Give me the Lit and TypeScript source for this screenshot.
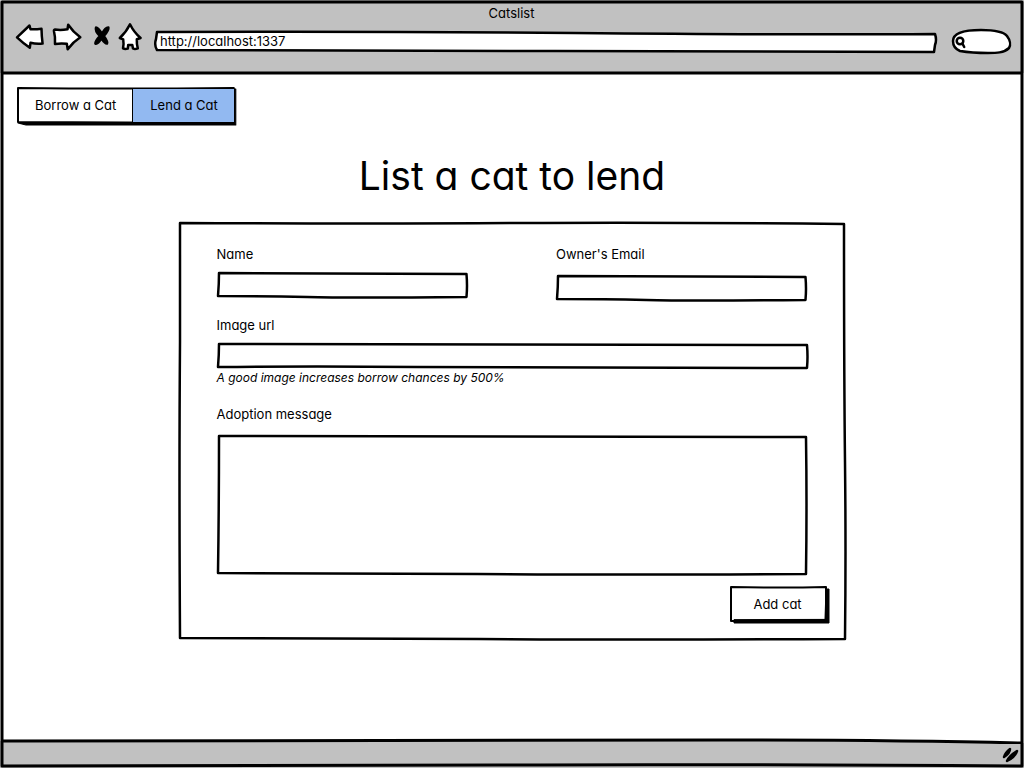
import { LitElement, html, svg, css } from "lit";
import { customElement, state } from "lit/decorators.js";

type Shape = { w: number; h: number; d: string; fill?: string; shadow?: string };

// Hand-drawn outlines, each stretched over the box that it frames.
const shapes: Record<string, Shape> = {
  url: {
    w: 782, h: 22, fill: "#fff",
    d: "M3 1 Q200 0 420 2 T781 3 Q783 9 781 14 L780 21 Q600 21 400 20 T3 19 Q0 14 2 8 Z",
  },
  search: {
    w: 61, h: 26, fill: "#fff",
    d: "M3 13 C3 5 14 2 31 2 C46 2 54 4 57 8 C60 12 61 17 59 20 C54 25 46 25 38 25 C26 25 16 24 10 23 C5 21 3 17 3 13 Z",
  },
  panel: {
    w: 667, h: 418,
    d: "M1 1 Q200 2 340 1 T665 2 Q665 150 666 240 T666 417 Q450 418 300 417 T1 416 Q0 250 1 120 Z",
  },
  short: { w: 251, h: 26, d: "M2 1 Q120 1 249 2 Q250 14 249 25 Q130 26 90 25 T1 24 Q2 12 2 1 Z" },
  wide: { w: 590, h: 26, d: "M2 1 Q200 1 589 2 Q590 14 589 25 Q300 25 200 24 T1 24 Q2 12 2 1 Z" },
  area: { w: 590, h: 140, d: "M2 1 Q300 1 588 2 Q589 70 588 139 Q400 140 260 139 T1 138 Q2 70 2 1 Z" },
  tabs: {
    w: 219, h: 39, fill: "#fff", shadow: "M1 36 L9 38 L218 38 L218 2 L216 2 L215 36 Z",
    d: "M1 1 Q100 2 216 1 L216 36 L1 35 Z",
  },
  button: {
    w: 100, h: 38, fill: "#fff", shadow: "M4 34 L4 37 L99 37 L99 3 L96 3 L95 33 Z",
    d: "M1 1 Q50 2 96 1 L96 34 Q50 35 1 35 Z",
  },
};

const outline = (name: string) => {
  const s = shapes[name];
  return html`<svg class="outline outline-${name}" viewBox="0 0 ${s.w} ${s.h}" preserveAspectRatio="none" aria-hidden="true">
    <path d=${s.d} fill=${s.fill ?? "none"}></path>
    ${s.shadow ? svg`<path class="shadow" d=${s.shadow}></path>` : null}
  </svg>`;
};

@customElement("app-root")
export class AppRoot extends LitElement {
  @state() private tab = "lend";

  static styles = css`
    :host {
      display: block;
      color: #000;
      font: 13px/20px Inter, sans-serif;
      font-feature-settings: "cv11";
    }
    * { box-sizing: border-box; }
    .window {
      position: relative;
      display: flex;
      flex-direction: column;
      min-height: 100vh;
      background: #fff;
    }
    .window-edge {
      position: absolute;
      inset: 0;
      width: 100%;
      height: 100%;
      pointer-events: none;
    }
    svg path, svg circle {
      stroke: #000;
      stroke-width: 2.5px;
      stroke-linejoin: round;
      stroke-linecap: round;
      vector-effect: non-scaling-stroke;
    }
    .outline-tabs path, .outline-button path { stroke-width: 2px; }
    .outline .shadow { stroke-width: 1px; }
    .window-edge path, .rule path { stroke-width: 3px; }
    .rule .fill { stroke: none; }
    .chrome { background: #c1c1c1; padding: 3px 13px 0 16px; }
    .title { text-align: center; margin-right: 4px; }
    .toolbar { display: flex; align-items: flex-start; gap: 14px; padding-bottom: 17px; }
    .icons { display: flex; gap: 9px; }
    .icon {
      display: block;
      padding: 0;
      border: 0;
      background: none;
      cursor: pointer;
    }
    .icon svg { display: block; overflow: visible; }
    .frame { position: relative; display: grid; }
    .frame > * { grid-area: 1 / 1; min-width: 0; }
    .frame > :not(.outline) { position: relative; }
    .outline { position: absolute; width: 100%; height: 100%; overflow: visible; }
    .url { flex: 1; height: 22px; margin-top: 8px; }
    .search { width: 61px; height: 26px; margin-top: 5px; }
    .glass { width: 14px; height: 14px; margin: 7px 0 0 4px; }
    input, textarea {
      width: 100%;
      margin: 0;
      padding: 0 6px;
      border: 0;
      background: none;
      color: inherit;
      font: inherit;
      font-feature-settings: inherit;
    }
    button { font: inherit; font-feature-settings: inherit; color: inherit; }
    .url input { padding-bottom: 4px; }
    .search input { padding-left: 20px; }
    .rule { display: block; width: 100%; height: 4px; overflow: visible; }
    .page { flex: 1; padding: 12px 17px 24px; }
    nav.frame { width: max-content; height: 39px; }
    .tab-row { display: flex; padding: 2px 3px 4px 1px; }
    .tab {
      border: 0;
      margin: 0;
      padding: 0 16px 1px 17px;
      background: none;
      cursor: pointer;
    }
    .tab + .tab { border-left: 1px solid #000; }
    .tab[aria-pressed="true"] { background: #92b9f1; }
    h1 {
      margin: 26px 0 22px;
      font-size: 39px;
      line-height: 48px;
      font-weight: 400;
      text-align: center;
    }
    .panel { max-width: 667px; margin: 0 auto; }
    form { padding: 22px 16px 16px; }
    .fields { display: flex; flex-direction: column; gap: 14px; padding: 0 22px; }
    .pair { display: grid; grid-template-columns: 1fr 1fr; gap: 88px; align-items: start; }
    .field { display: flex; flex-direction: column; }
    .field label { margin-bottom: 8px; }
    .roomy label { margin-bottom: 11px; }
    .line { height: 26px; }
    .area { height: 140px; }
    textarea { display: block; padding: 6px; resize: none; }
    .hint { margin: 0 0 3px; font-size: 12px; line-height: 18px; font-style: italic; }
    .actions { display: flex; justify-content: flex-end; margin-top: 11px; }
    .submit { width: 100px; height: 38px; }
    .submit button {
      border: 0;
      margin: 0;
      padding: 0 4px 2px 0;
      background: none;
      cursor: pointer;
    }
    .status {
      display: flex;
      justify-content: flex-end;
      height: 24px;
      padding: 3px 5px 0;
      background: #c1c1c1;
    }
    .grip { width: 18px; height: 16px; }
  `;

  private icon(label: string, width: number, x: number, d: string, fill = "#fff") {
    return html`<button class="icon" type="button" aria-label=${label}>
      <svg width=${width} height="28" viewBox="${x} 23 ${width} 28"><path d=${d} fill=${fill}></path></svg>
    </button>`;
  }

  private tabButton(id: string, text: string) {
    return html`<button class="tab" type="button" aria-pressed=${this.tab === id ? "true" : "false"}
      @click=${() => (this.tab = id)}>${text}</button>`;
  }

  render() {
    return html`
      <div class="window">
        <header class="chrome">
          <div class="title">Catslist</div>
          <div class="toolbar">
            <div class="icons">
              ${this.icon("Back", 28, 16, "M17 37.3 L29.5 25.5 L30.5 29.3 Q36 29.5 41.5 28.8 Q41.6 36 42.6 43.6 Q36 44.2 30.5 42.8 L29.8 47.8 Q23 43 17 37.3 Z")}
              ${this.icon("Forward", 28, 53, "M55 29.5 Q61 30.4 67.5 29.2 L68.2 24.8 Q73 32 80.3 37.3 Q73 42 67.7 49.3 L66.8 43.8 Q61 43 55 44 Q55.5 37 54 31.5 Q53.6 29.8 55 29.5 Z")}
              ${this.icon("Stop", 20, 90, "M96 27.6 C98 27.6 100.5 31.5 102 34 C103.5 31 106.5 27.4 108.4 27.6 C108.8 30 106 33.5 103.8 36 C106 39 107.8 42.4 107 43.6 C105 43.8 102.8 40.6 101.4 38.4 C99.5 41.5 97 44.4 95.4 43.6 C95.2 41.4 97.8 38.2 99.8 36 C97.4 33.5 95.2 30 96 27.6 Z", "#000")}
              ${this.icon("Home", 21, 119, "M130 24.3 Q134 32.5 140.6 38 L136.8 39.2 Q136.6 44 137.8 48.3 Q135 49.6 133 48.5 L132.3 45 L128.2 45 L127.8 48.6 Q125 49.4 123 48.4 Q124 44 123.2 39.4 L119.8 38 Q126 32.5 130 24.3 Z")}
            </div>
            <div class="frame url">${outline("url")}
              <input type="url" aria-label="Address" value="http://localhost:1337" />
            </div>
            <div class="frame search">${outline("search")}
              <svg class="glass" viewBox="0 0 14 14" aria-hidden="true">
                <circle cx="6" cy="6" r="3.3" fill="none"></circle><path d="M8.4 8.5 L10.2 12"></path>
              </svg>
              <input type="search" aria-label="Search" />
            </div>
          </div>
        </header>
        <svg class="rule" viewBox="0 0 1024 4" preserveAspectRatio="none" aria-hidden="true">
          <path class="fill" d="M0 0 H1024 V2 H0 Z" fill="#c1c1c1"></path>
          <path d="M3 2 Q300 3 520 2 T1021 2" fill="none"></path>
        </svg>

        <main class="page">
          <nav class="frame" aria-label="Sections">${outline("tabs")}
            <div class="tab-row">
              ${this.tabButton("borrow", "Borrow a Cat")}${this.tabButton("lend", "Lend a Cat")}
            </div>
          </nav>
          <h1>List a cat to lend</h1>
          <section class="frame panel">${outline("panel")}
            <form @submit=${(e: Event) => e.preventDefault()}>
              <div class="fields">
                <div class="pair">
                  <div class="field">
                    <label for="name">Name</label>
                    <div class="frame line">${outline("short")}<input id="name" type="text" /></div>
                  </div>
                  <div class="field roomy">
                    <label for="email">Owner's Email</label>
                    <div class="frame line">${outline("short")}<input id="email" type="email" /></div>
                  </div>
                </div>
                <div class="field">
                  <label for="image">Image url</label>
                  <div class="frame line">${outline("wide")}<input id="image" type="url" aria-describedby="hint" /></div>
                  <p class="hint" id="hint">A good image increases borrow chances by 500%</p>
                </div>
                <div class="field roomy">
                  <label for="message">Adoption message</label>
                  <div class="frame area">${outline("area")}<textarea id="message"></textarea></div>
                </div>
              </div>
              <div class="actions">
                <div class="frame submit">${outline("button")}<button type="submit">Add cat</button></div>
              </div>
            </form>
          </section>
        </main>

        <svg class="rule" viewBox="0 0 1024 4" preserveAspectRatio="none" aria-hidden="true">
          <path class="fill" d="M0 1 H800 L1024 3 V4 H0 Z" fill="#c1c1c1"></path>
          <path d="M3 1 Q400 1 720 0 Q900 0 1021 3" fill="none"></path>
        </svg>
        <footer class="status">
          <svg class="grip" viewBox="0 0 18 16" aria-hidden="true">
            <path d="M3 10 Q4 6 9 2 Q9 6 3 10 Z M6 14 Q8 9 16 4 Q14 10 6 14 Z" fill="#000"></path>
          </svg>
        </footer>
        <svg class="window-edge" viewBox="0 0 1024 768" preserveAspectRatio="none" aria-hidden="true">
          <path d="M2 2 Q500 1 1022 2 Q1021 400 1022 766 Q700 764 500 765 T2 766 Q3 500 2 300 Z" fill="none"></path>
        </svg>
      </div>
    `;
  }
}
